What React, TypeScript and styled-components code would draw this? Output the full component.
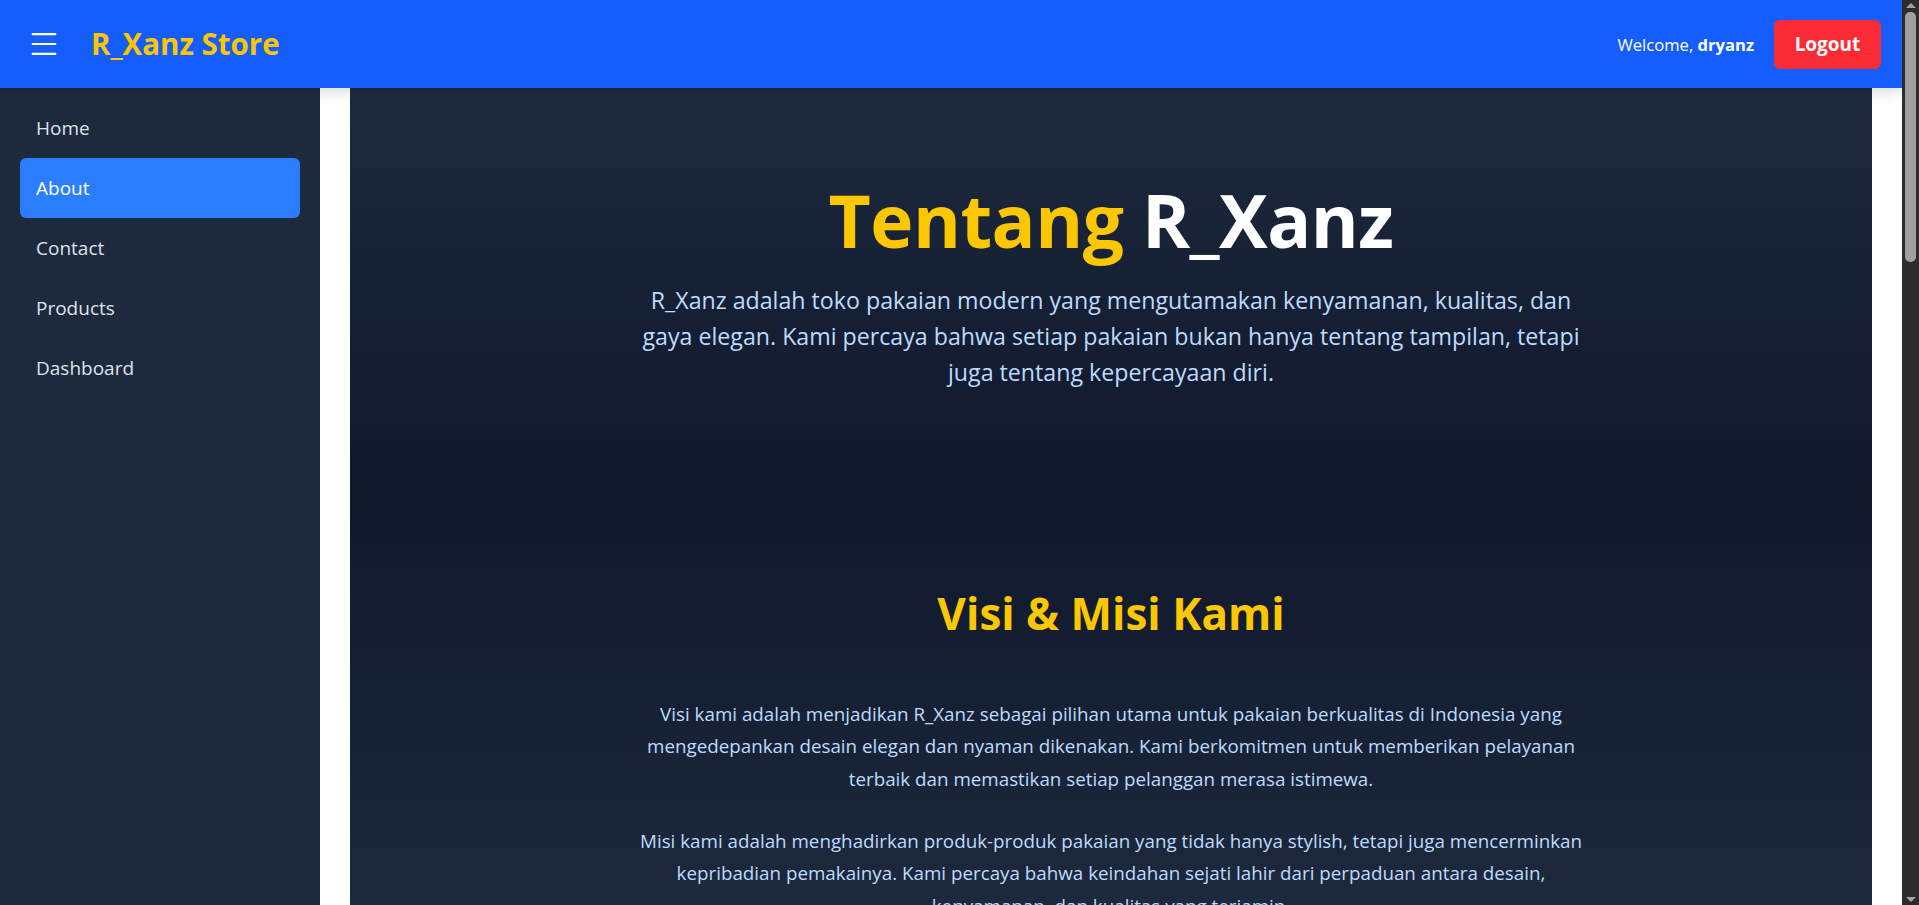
import React from "react";
import styled, { createGlobalStyle } from "styled-components";
import { Menu } from "lucide-react";

const GlobalStyle = createGlobalStyle`
  * { box-sizing: border-box; }
  html, body {
    height: 100%;
    overflow: hidden;
  }
  body {
    margin: 0;
    background: #ffffff;
    font-family: "Open Sans", "Noto Sans", sans-serif;
  }
`;

const Viewport = styled.div`
  display: flex;
  height: 100vh;
`;

const Shell = styled.div`
  flex: 1;
  min-width: 0;
  overflow-y: auto;
  scrollbar-width: none;
  display: flex;
  flex-direction: column;
`;

const ScrollRail = styled.div`
  width: 17px;
  flex-shrink: 0;
  background: #2c2c2c;
  display: flex;
  flex-direction: column;
  align-items: center;
  padding: 3px 0;
`;

const RailArrow = styled.div<{ $down?: boolean }>`
  width: 0;
  height: 0;
  border-left: 5px solid transparent;
  border-right: 5px solid transparent;
  ${(p) =>
    p.$down ? "border-top: 5px solid #a3a3a3;" : "border-bottom: 5px solid #a3a3a3;"}
`;

const RailTrack = styled.div`
  flex: 1;
  width: 100%;
  padding: 4px 3px;
  display: flex;
`;

const RailThumb = styled.div`
  width: 100%;
  height: 250px;
  background: #9f9f9f;
  border-radius: 5px;
`;

const Navbar = styled.header`
  position: relative;
  z-index: 10;
  height: 88px;
  flex-shrink: 0;
  background: #155dfc;
  display: flex;
  align-items: center;
  justify-content: space-between;
  padding: 0 21px 0 27px;
  box-shadow: 0 4px 12px rgba(0, 0, 0, 0.15);
`;

const Brand = styled.div`
  display: flex;
  align-items: center;
  gap: 30px;
`;

const MenuButton = styled.button`
  background: none;
  border: 0;
  padding: 0;
  color: #ffffff;
  display: flex;
  cursor: pointer;
`;

const Logo = styled.span`
  color: #fdc700;
  font-weight: 700;
  font-size: 29.5px;
  line-height: 1;
`;

const UserArea = styled.div`
  display: flex;
  align-items: center;
  gap: 20px;
`;

const Welcome = styled.span`
  color: #ffffff;
  font-size: 16.6px;
  b {
    font-weight: 700;
  }
`;

const LogoutButton = styled.button`
  background: #fb2c36;
  color: #ffffff;
  border: 0;
  border-radius: 6px;
  width: 107px;
  height: 49px;
  font-weight: 700;
  font-size: 19px;
  font-family: inherit;
  cursor: pointer;
`;

const Body = styled.div`
  display: flex;
  flex: 1 0 auto;
`;

const Sidebar = styled.nav`
  width: 320px;
  flex-shrink: 0;
  background: #1d293d;
  padding: 10px 20px;
  display: flex;
  flex-direction: column;
`;

const NavItem = styled.a<{ $active?: boolean }>`
  display: flex;
  align-items: center;
  height: 60px;
  flex-shrink: 0;
  padding: 0 16px;
  border-radius: 6px;
  font-size: 19px;
  color: ${(p) => (p.$active ? "#ffffff" : "#dde3ec")};
  background: ${(p) => (p.$active ? "#2b7fff" : "transparent")};
  text-decoration: none;
`;

const Main = styled.main`
  flex: 1;
  min-width: 0;
  padding: 0 30px;
`;

const Content = styled.div`
  background: #1d293d;
  min-height: 3060px;
`;

const Hero = styled.section`
  display: flex;
  flex-direction: column;
  align-items: center;
  text-align: center;
  height: 402px;
  padding: 88px 40px 0;
  background: linear-gradient(180deg, #1e2a3e 0%, #0f172b 100%);
`;

const Title = styled.h1`
  margin: 0;
  font-size: 73px;
  line-height: 1.2;
  font-weight: 700;
  letter-spacing: -0.5px;
  color: #ffffff;
`;

const Accent = styled.span`
  color: #fdc700;
`;

const Lead = styled.p`
  margin: 18px 0 0;
  max-width: 975px;
  font-size: 23.2px;
  line-height: 36px;
  color: #bedbff;
`;

const Vision = styled.section`
  display: flex;
  flex-direction: column;
  align-items: center;
  text-align: center;
  padding: 97px 40px 80px;
  background: linear-gradient(180deg, #0f172b 0px, #1d293d 420px, #1d293d 100%);
`;

const SectionTitle = styled.h2`
  margin: 0 0 58px;
  font-size: 44px;
  line-height: 1.2;
  font-weight: 700;
  color: #fdc700;
`;

const Text = styled.p`
  margin: 0 0 30px;
  max-width: 960px;
  font-size: 18.8px;
  line-height: 32.4px;
  color: #bedbff;
`;

const menu = ["Home", "About", "Contact", "Products", "Dashboard"];

export default function App() {
  return (
    <>
      <GlobalStyle />
      <Viewport>
        <Shell>
          <Navbar>
            <Brand>
              <MenuButton aria-label="menu">
                <Menu size={34} strokeWidth={1.5} />
              </MenuButton>
              <Logo>R_Xanz Store</Logo>
            </Brand>
            <UserArea>
              <Welcome>
                Welcome, <b>dryanz</b>
              </Welcome>
              <LogoutButton>Logout</LogoutButton>
            </UserArea>
          </Navbar>
          <Body>
            <Sidebar>
              {menu.map((m) => (
                <NavItem key={m} href="#" $active={m === "About"}>
                  {m}
                </NavItem>
              ))}
            </Sidebar>
            <Main>
              <Content>
                <Hero>
                  <Title>
                    <Accent>Tentang</Accent> R_Xanz
                  </Title>
                  <Lead>
                    R_Xanz adalah toko pakaian modern yang mengutamakan kenyamanan, kualitas, dan
                    gaya elegan. Kami percaya bahwa setiap pakaian bukan hanya tentang tampilan,
                    tetapi juga tentang kepercayaan diri.
                  </Lead>
                </Hero>
                <Vision>
                  <SectionTitle>Visi &amp; Misi Kami</SectionTitle>
                  <Text>
                    Visi kami adalah menjadikan R_Xanz sebagai pilihan utama untuk pakaian
                    berkualitas di Indonesia yang mengedepankan desain elegan dan nyaman
                    dikenakan. Kami berkomitmen untuk memberikan pelayanan terbaik dan memastikan
                    setiap pelanggan merasa istimewa.
                  </Text>
                  <Text>
                    Misi kami adalah menghadirkan produk-produk pakaian yang tidak hanya stylish,
                    tetapi juga mencerminkan kepribadian pemakainya. Kami percaya bahwa keindahan
                    sejati lahir dari perpaduan antara desain, kenyamanan, dan kualitas yang
                    terjamin.
                  </Text>
                </Vision>
              </Content>
            </Main>
          </Body>
        </Shell>
        <ScrollRail aria-hidden="true">
          <RailArrow />
          <RailTrack>
            <RailThumb />
          </RailTrack>
          <RailArrow $down />
        </ScrollRail>
      </Viewport>
    </>
  );
}
